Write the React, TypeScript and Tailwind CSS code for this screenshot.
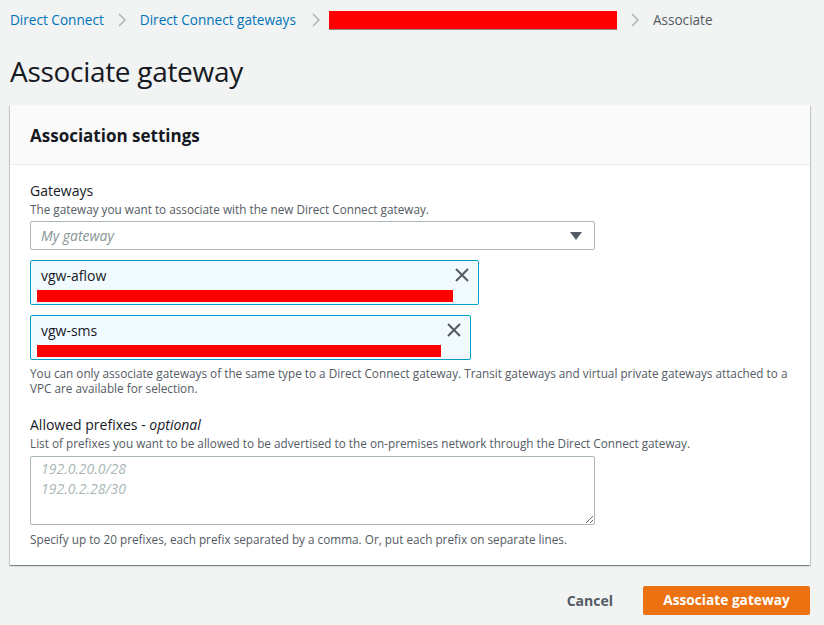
import React from "react";

const Chevron = () => (
  <svg width="10" height="16" viewBox="0 0 10 16" className="mx-[13px] shrink-0">
    <path d="M2 2 L8 8 L2 14" fill="none" stroke="#aab7b8" strokeWidth="1.5" />
  </svg>
);

const XIcon = () => (
  <svg width="16" height="16" viewBox="0 0 16 16">
    <path d="M2 2 L14 14 M14 2 L2 14" fill="none" stroke="#545b64" strokeWidth="2" />
  </svg>
);

const Token = ({ name, w, bar }: { name: string; w: string; bar: string }) => (
  <div className={`relative h-[45px] ${w} border border-[#00a1c9] bg-[#f1faff] rounded-[2px] px-[10px] pt-[4px]`}>
    <div className="text-[14px] text-[#16191f] leading-[22px]">{name}</div>
    <div className={`h-[12px] ${bar} bg-[#ff0000] -ml-[4px] mt-[3px]`} />
    <div className="absolute right-[8px] top-[6px]">
      <XIcon />
    </div>
  </div>
);

export default function App() {
  return (
    <div className="w-[824px] h-[625px] bg-[#f2f3f3] overflow-hidden" style={{ fontFamily: '"Open Sans", sans-serif' }}>
      <div className="flex items-center h-[40px] px-[10px] text-[13.6px]">
        <span className="text-[#0073bb]">Direct Connect</span>
        <Chevron />
        <span className="text-[#0073bb]">Direct Connect gateways</span>
        <div className="w-[20px]" />
        <svg width="10" height="16" viewBox="0 0 10 16" className="shrink-0 -ml-[5px] mr-[8px]">
          <path d="M2 2 L8 8 L2 14" fill="none" stroke="#aab7b8" strokeWidth="1.5" />
        </svg>
        <div className="w-[288px] h-[19px] bg-[#ff0000] border-b border-[#888]" />
        <Chevron />
        <span className="text-[#545b64]">Associate</span>
      </div>
      <h1 className="px-[10px] mt-[9px] text-[28px] leading-[44px] text-[#16191f] tracking-[-0.3px]">Associate gateway</h1>
      <div className="mx-[10px] mt-[12px] w-[800px] bg-white shadow-[0_1px_1px_0_rgba(0,28,36,0.3),1px_1px_1px_0_rgba(0,28,36,0.15),-1px_1px_1px_0_rgba(0,28,36,0.15)]">
        <div className="h-[60px] bg-[#fafafa] border-b border-[#eaeded] flex items-center px-[20px]">
          <h2 className="text-[17px] font-bold text-[#16191f] mt-[2px]">Association settings</h2>
        </div>
        <div className="px-[20px] pt-[16px] pb-[18px]">
          <div className="text-[14px] text-[#16191f] leading-[20px]">Gateways</div>
          <div className="text-[11.75px] text-[#545b64] leading-[16px]">The gateway you want to associate with the new Direct Connect gateway.</div>
          <div className="mt-[4px] w-[565px] h-[29px] border border-[#aab7b8] rounded-[2px] flex items-center justify-between pl-[10px] pr-[12px]">
            <span className="italic text-[14px] text-[#879596]">My gateway</span>
            <svg width="12" height="8" viewBox="0 0 12 8"><path d="M0 0 L12 0 L6 8 Z" fill="#545b64" /></svg>
          </div>
          <div className="mt-[10px] flex flex-col gap-[10px]">
            <Token name="vgw-aflow" w="w-[449px]" bar="w-[416px]" />
            <Token name="vgw-sms" w="w-[441px]" bar="w-[404px]" />
          </div>
          <div className="mt-[6px] text-[11.75px] text-[#545b64] leading-[15px]">
            You can only associate gateways of the same type to a Direct Connect gateway. Transit gateways and virtual private gateways attached to a VPC are available for selection.
          </div>
          <div className="mt-[19px] text-[14px] text-[#16191f] leading-[20px]">
            Allowed prefixes - <i>optional</i>
          </div>
          <div className="text-[11.75px] text-[#545b64] leading-[16px]">List of prefixes you want to be allowed to be advertised to the on-premises network through the Direct Connect gateway.</div>
          <textarea
            className="mt-[5px] block w-[565px] h-[69px] border border-[#aab7b8] rounded-[2px] px-[10px] py-[2px] text-[14px] leading-[20px] italic placeholder:text-[#aab7b8] outline-none"
            placeholder={"192.0.20.0/28\n192.0.2.28/30"}
          />
          <div className="mt-[6px] text-[11.75px] text-[#545b64] leading-[16px]">Specify up to 20 prefixes, each prefix separated by a comma. Or, put each prefix on separate lines.</div>
        </div>
      </div>
      <div className="flex justify-end items-center mt-[21px] mr-[14px] gap-[30px]">
        <span className="text-[14px] font-bold text-[#545b64]">Cancel</span>
        <button className="w-[167px] h-[29px] bg-[#ec7211] rounded-[2px] text-white text-[13.7px] font-bold">Associate gateway</button>
      </div>
    </div>
  );
}
